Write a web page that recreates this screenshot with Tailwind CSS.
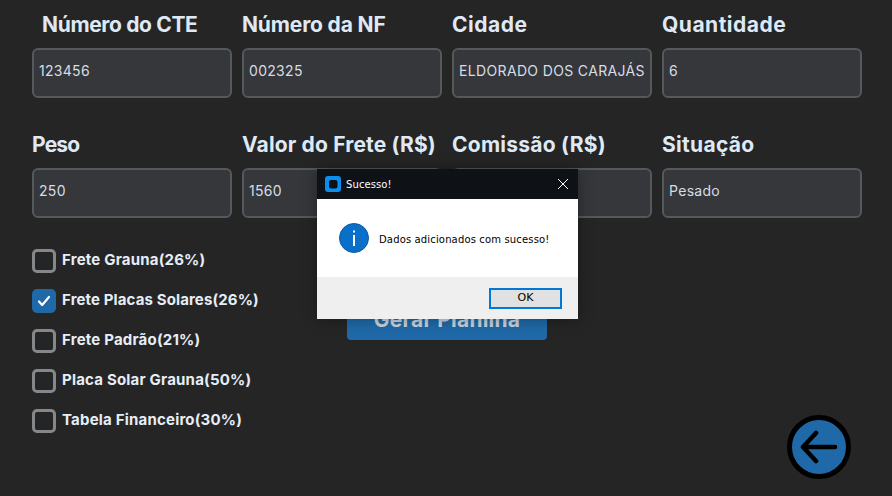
<!DOCTYPE html>
<html lang="en">
<head>
  <meta charset="UTF-8" />
  <meta name="viewport" content="width=device-width, initial-scale=1.0"/>
  <title>Adicionar dados</title>
  <script src="https://cdn.jsdelivr.net/npm/@tailwindcss/browser@4"></script>
</head>
<body class="bg-[#252525] h-[496px] w-[892px] overflow-hidden relative font-['Inter',sans-serif]">

  <!-- Form fields -->
  <main class="pl-[32px]">
    <div class="grid grid-cols-[repeat(4,200px)] gap-x-[10px] gap-y-[22px]">
      <div>
        <div class="h-[48px] flex items-center pt-[1px] pl-[10px] text-[21px] tracking-[-0.35px] font-bold text-[#dfe9f5] whitespace-nowrap">Número do CTE</div>
        <div class="h-[50px] flex items-center px-[5px] pb-[5px] bg-[#35373a] border-2 border-[#54595c] rounded-md text-[14px] tracking-[0.3px] text-[#d5dde6]">123456</div>
      </div>
      <div>
        <div class="h-[48px] flex items-center pt-[1px] text-[21px] tracking-[-0.15px] font-bold text-[#dfe9f5] whitespace-nowrap">Número da NF</div>
        <div class="h-[50px] flex items-center px-[5px] pb-[5px] bg-[#35373a] border-2 border-[#54595c] rounded-md text-[14px] tracking-[0.3px] text-[#d5dde6]">002325</div>
      </div>
      <div>
        <div class="h-[48px] flex items-center pt-[1px] text-[21px] tracking-[0.5px] font-bold text-[#dfe9f5]">Cidade</div>
        <div class="h-[50px] flex items-center px-[5px] pb-[5px] bg-[#35373a] border-2 border-[#54595c] rounded-md text-[14px] tracking-[0.35px] text-[#d5dde6] whitespace-nowrap">ELDORADO DOS CARAJÁS</div>
      </div>
      <div>
        <div class="h-[48px] flex items-center pt-[1px] text-[21px] tracking-[0.5px] font-bold text-[#dfe9f5]">Quantidade</div>
        <div class="h-[50px] flex items-center px-[5px] pb-[5px] bg-[#35373a] border-2 border-[#54595c] rounded-md text-[14px] tracking-[0.3px] text-[#d5dde6]">6</div>
      </div>
      <div>
        <div class="h-[48px] flex items-center pt-[1px] text-[21px] tracking-[-0.8px] font-bold text-[#dfe9f5]">Peso</div>
        <div class="h-[50px] flex items-center px-[5px] pb-[5px] bg-[#35373a] border-2 border-[#54595c] rounded-md text-[14px] tracking-[0.3px] text-[#d5dde6]">250</div>
      </div>
      <div>
        <div class="h-[48px] flex items-center pt-[1px] text-[21px] tracking-[0.15px] font-bold text-[#dfe9f5] whitespace-nowrap">Valor do Frete (R$)</div>
        <div class="h-[50px] flex items-center px-[5px] pb-[5px] bg-[#35373a] border-2 border-[#54595c] rounded-md text-[14px] tracking-[0.3px] text-[#d5dde6]">1560</div>
      </div>
      <div>
        <div class="h-[48px] flex items-center pt-[1px] text-[21px] tracking-[0.25px] font-bold text-[#dfe9f5] whitespace-nowrap">Comissão (R$)</div>
        <div class="h-[50px] flex items-center px-[5px] pb-[5px] bg-[#35373a] border-2 border-[#54595c] rounded-md text-[14px] tracking-[0.3px] text-[#d5dde6]"></div>
      </div>
      <div>
        <div class="h-[48px] flex items-center pt-[1px] text-[21px] tracking-[0.3px] font-bold text-[#dfe9f5]">Situação</div>
        <div class="h-[50px] flex items-center px-[5px] pb-[5px] bg-[#35373a] border-2 border-[#54595c] rounded-md text-[14px] tracking-[0.3px] text-[#d5dde6]">Pesado</div>
      </div>
    </div>

    <!-- Checkboxes and button -->
    <div class="flex mt-[31px]">
      <ul class="w-[315px] flex flex-col gap-[16px] text-[15px] tracking-[0.2px] font-bold text-[#e6edf6]">
        <li class="flex items-center gap-[6px] h-[24px]"><span class="w-[24px] h-[24px] rounded-[5px] border-[3px] border-[#85888b]"></span><span class="pb-[2px]">Frete Grauna(26%)</span></li>
        <li class="flex items-center gap-[6px] h-[24px]">
          <span class="w-[24px] h-[24px] rounded-[5px] bg-[#1f69a8] flex items-center justify-center">
            <svg width="14" height="12" viewBox="0 0 14 12" fill="none" stroke="#fff" stroke-width="2.2" stroke-linecap="round" stroke-linejoin="round"><path d="M2 6.5 5.2 10 12 2"/></svg>
          </span><span class="pb-[2px] tracking-[0.12px]">Frete Placas Solares(26%)</span></li>
        <li class="flex items-center gap-[6px] h-[24px]"><span class="w-[24px] h-[24px] rounded-[5px] border-[3px] border-[#85888b]"></span><span class="pb-[2px]">Frete Padrão(21%)</span></li>
        <li class="flex items-center gap-[6px] h-[24px]"><span class="w-[24px] h-[24px] rounded-[5px] border-[3px] border-[#85888b]"></span><span class="pb-[2px]">Placa Solar Grauna(50%)</span></li>
        <li class="flex items-center gap-[6px] h-[24px]"><span class="w-[24px] h-[24px] rounded-[5px] border-[3px] border-[#85888b]"></span><span class="pb-[2px]">Tabela Financeiro(30%)</span></li>
      </ul>
      <button class="w-[200px] h-[40px] mt-[51px] bg-[#1f69a8] rounded-[4px] text-[21px] tracking-[0.2px] font-bold text-[#c9d3dd]">Gerar Planilha</button>
    </div>
  </main>

  <!-- Back button -->
  <button class="absolute left-[787px] top-[415px] w-[64px] h-[64px] rounded-full bg-[#1f69a8] border-[5px] border-black flex items-center justify-center">
    <svg width="40" height="34" viewBox="0 0 40 34" fill="none" stroke="#000" stroke-width="4.5" stroke-linecap="round" stroke-linejoin="round"><path d="M36 17H4M17 3 4 17l13 14"/></svg>
  </button>

  <!-- Message box -->
  <div class="absolute left-[317px] top-[169px] w-[261px] h-[150px] flex flex-col shadow-[0_0_14px_rgba(0,0,0,0.35)] font-['DejaVu_Sans',sans-serif]">
    <div class="h-[30px] bg-[#0e1116] flex items-center pl-[8px] pr-[9px] text-white text-[10px] tracking-[0.1px]">
      <svg width="16" height="16" viewBox="0 0 16 16" class="mr-[5px]"><rect width="16" height="16" rx="3" fill="#0a8ff0"/><rect x="4" y="4" width="8.5" height="8.5" rx="2" fill="#0e1116"/></svg>
      <span>Sucesso!</span>
      <svg width="12" height="12" viewBox="0 0 12 12" class="ml-auto" fill="none" stroke="#fff" stroke-width="1"><path d="M1 1l10 10M11 1 1 11"/></svg>
    </div>
    <div class="h-[78px] bg-white flex items-center pl-[22px] text-[10px] tracking-[0.15px] text-black">
      <svg width="30" height="30" viewBox="0 0 30 30" class="mr-[10px]"><circle cx="15" cy="15" r="14.5" fill="#0a6fc9" stroke="#0a5aa5"/><rect x="14" y="12" width="2" height="11" fill="#fff"/><rect x="14" y="7.5" width="2" height="2" fill="#fff"/></svg>
      <span class="pt-[3px]">Dados adicionados com sucesso!</span>
    </div>
    <div class="h-[42px] bg-[#efefef] flex items-center justify-end pr-[16px]">
      <button class="w-[73px] h-[21px] bg-[#e1e1e1] border-2 border-[#0078d7] text-[11px] text-black">OK</button>
    </div>
  </div>
</body>
</html>
